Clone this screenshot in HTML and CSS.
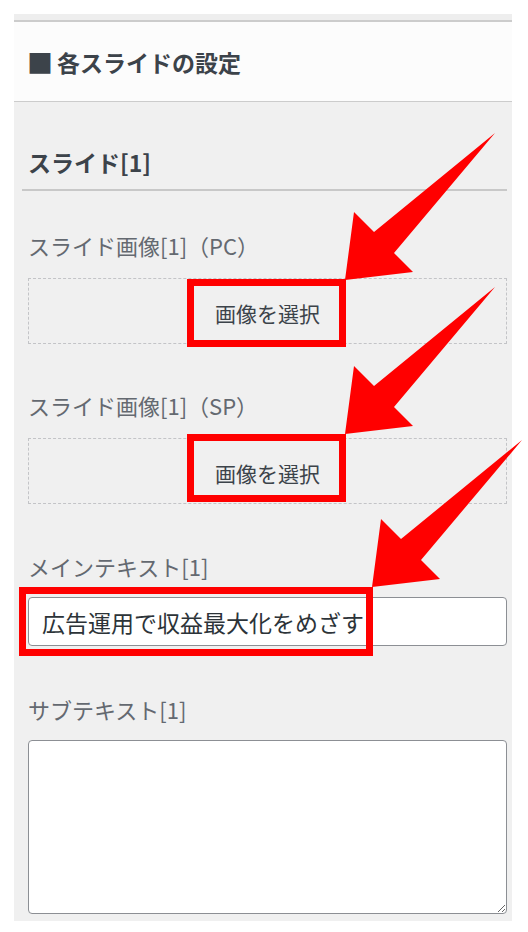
FILE: index.html
```html
<!DOCTYPE html>
<html lang="ja">
<head>
    <meta charset="UTF-8">
    <meta name="viewport" content="width=device-width, initial-scale=1.0">
    <title>各スライドの設定</title>
    <link rel="stylesheet" href="styles.css">
</head>
<body>
    <div class="page">
        <div class="panel">
            <div class="panel-top"></div>
            <h2 class="panel-head"><span class="head-mark">■</span>各スライドの設定</h2>
            <div class="panel-body">
                <h3 class="slide-title">スライド[1]</h3>

                <div class="field">
                    <label class="field-label">スライド画像[1]（PC）</label>
                    <div class="image-box">
                        <button class="select-btn">画像を選択</button>
                    </div>
                </div>

                <div class="field">
                    <label class="field-label">スライド画像[1]（SP）</label>
                    <div class="image-box">
                        <button class="select-btn">画像を選択</button>
                    </div>
                </div>

                <div class="field field-main">
                    <label class="field-label">メインテキスト[1]</label>
                    <input class="text-input" type="text" value="広告運用で収益最大化をめざす">
                </div>

                <div class="field field-sub">
                    <label class="field-label">サブテキスト[1]</label>
                    <textarea class="text-area"></textarea>
                </div>
            </div>
        </div>

        <!-- 注釈（赤枠と矢印） -->
        <svg class="marks" width="528" height="932" viewBox="0 0 528 932">
            <g fill="none" stroke="#ff0000" stroke-width="7">
                <rect x="190.5" y="282.5" width="152" height="61"/>
                <rect x="190.5" y="437.5" width="152" height="61"/>
                <rect x="22.5" y="590.5" width="347" height="62"/>
            </g>
            <g fill="#ff0000">
                <polygon points="345,280 354,212 374,232 495,133 394,253 413,272"/>
                <polygon points="345,280 354,212 374,232 495,133 394,253 413,272" transform="translate(0 154)"/>
                <polygon points="345,280 354,212 374,232 495,133 394,253 413,272" transform="translate(27 307)"/>
            </g>
        </svg>
    </div>
</body>
</html>
```

FILE: styles.css
```css
*{
    margin:0;
    padding:0;
    box-sizing:border-box;
}
body{
    background:#fff;
    font-family:"Noto Sans CJK JP", "Noto Sans", sans-serif;
}
.page{
    position:relative;
    width:528px;
    height:932px;
    padding:14px 16px 0 14px;
}
.panel{
    background:#f0f0f0;
}
.panel-top{
    height:8px;
    background:#eeeeee;
    border-bottom:2px solid #cccccc;
}
.panel-head{
    display:flex;
    align-items:center;
    height:80px;
    padding-left:13px;
    background:#fcfcfc;
    border-bottom:1px solid #cccccc;
    font-size:23px;
    font-weight:bold;
    color:#3c434a;
}
.head-mark{
    margin-right:4px;
    font-size:26px;
    line-height:1;
}
.panel-body{
    padding:45px 5px 7px 8px;
}
.slide-title{
    padding:0 0 12px 6px;
    border-bottom:2px solid #c8c8c8;
    font-size:23px;
    line-height:30px;
    font-weight:bold;
    color:#3c434a;
}
.field{
    margin-top:47px;
    padding-left:6px;
}
.field:nth-child(2){
    margin-top:40px;
}
.field-main{
    margin-top:48px;
}
.field-sub{
    margin-top:49px;
}
.field-label{
    display:block;
    margin-bottom:19px;
    font-size:22px;
    line-height:28px;
    color:#646970;
}
.field-main .field-label,
.field-sub .field-label{
    margin-bottom:17px;
}
.image-box{
    display:flex;
    justify-content:center;
    align-items:center;
    height:66px;
    padding-top:4px;
    border:1px dashed #c3c4c7;
}
.select-btn{
    width:141px;
    height:54px;
    border:none;
    background:transparent;
    font-family:inherit;
    font-size:21px;
    color:#3c434a;
}
.text-input{
    display:block;
    width:100%;
    height:49px;
    padding:0 13px;
    border:1px solid #8c8f94;
    border-radius:4px;
    background:#fff;
    font-family:inherit;
    font-size:23px;
    color:#2c3338;
}
.text-area{
    display:block;
    width:100%;
    height:174px;
    border:1px solid #8c8f94;
    border-radius:4px;
    background:#fff;
    resize:vertical;
}
.marks{
    position:absolute;
    top:0;
    left:0;
    pointer-events:none;
}
```
